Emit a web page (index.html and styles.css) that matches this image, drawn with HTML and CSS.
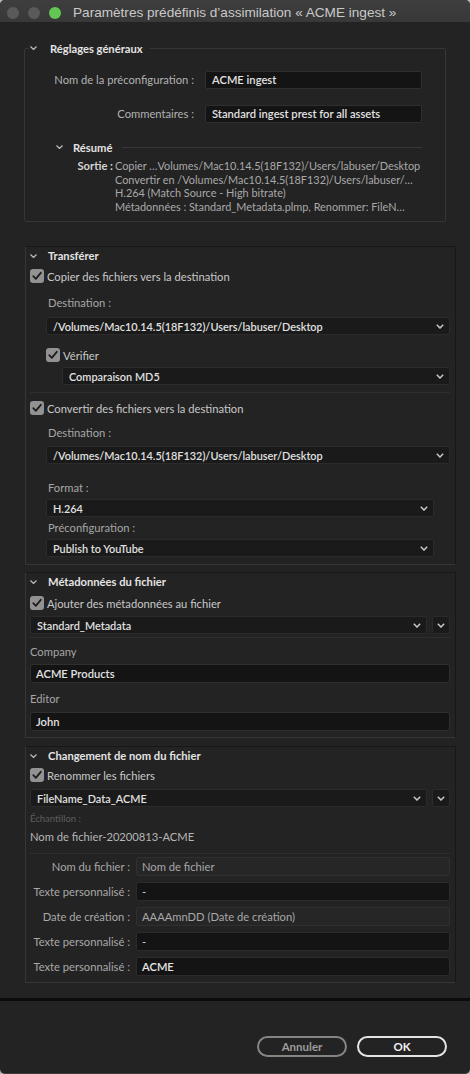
FILE: index.html
```html
<!DOCTYPE html>
<html lang="fr">
<head>
<meta charset="utf-8">
<title>Paramètres prédéfinis d’assimilation</title>
<link rel="stylesheet" href="styles.css">
</head>
<body>
<div class="window">
  <header class="titlebar">
    <div class="lights">
      <span class="light gray"></span>
      <span class="light gray"></span>
      <span class="light green"></span>
    </div>
    <div class="title">Paramètres prédéfinis d’assimilation « ACME ingest »</div>
  </header>

  <main class="content">
    <fieldset class="general">
      <legend><svg class="chev" width="7" height="4" viewBox="0 0 7 4"><polyline points="0.5,0.5 3.5,3.5 6.5,0.5"/></svg><span class="legend-text">Réglages généraux</span></legend>
      <div class="form-grid">
        <div class="form-label">Nom de la préconfiguration :</div>
        <div class="input strong">ACME ingest</div>
        <div class="form-label">Commentaires :</div>
        <div class="input strong">Standard ingest prest for all assets</div>
      </div>
      <div class="summary-head">
        <svg class="chev" width="7" height="4" viewBox="0 0 7 4"><polyline points="0.5,0.5 3.5,3.5 6.5,0.5"/></svg>
        <span class="summary-title">Résumé</span>
        <span class="rule"></span>
      </div>
      <div class="summary">
        <div class="summary-label">Sortie :</div>
        <div class="summary-lines">
          <div>Copier …Volumes/Mac10.14.5(18F132)/Users/labuser/Desktop</div>
          <div>Convertir en /Volumes/Mac10.14.5(18F132)/Users/labuser/…</div>
          <div>H.264 (Match Source - High bitrate)</div>
          <div>Métadonnées : Standard_Metadata.plmp, Renommer: FileN…</div>
        </div>
      </div>
    </fieldset>

    <div class="sections">
      <section class="box">
        <div class="sec-head"><svg class="chev" width="7" height="4" viewBox="0 0 7 4"><polyline points="0.5,0.5 3.5,3.5 6.5,0.5"/></svg><span>Transférer</span></div>
        <div class="check-row mt6"><span class="checkbox"><svg width="14" height="14" viewBox="0 0 14 14"><polyline points="3.3,7.2 5.8,9.8 10.8,3.8"/></svg></span><span>Copier des fichiers vers la destination</span></div>
        <div class="field-label indent mt13">Destination :</div>
        <div class="dropdown indent mt7"><span>/Volumes/Mac10.14.5(18F132)/Users/labuser/Desktop</span><svg class="dd-chev" width="8" height="5" viewBox="0 0 8 5"><polyline points="0.8,0.8 4,4 7.2,0.8"/></svg></div>
        <div class="check-row indent mt13"><span class="checkbox"><svg width="14" height="14" viewBox="0 0 14 14"><polyline points="3.3,7.2 5.8,9.8 10.8,3.8"/></svg></span><span>Vérifier</span></div>
        <div class="dropdown indent2 mt5"><span>Comparaison MD5</span><svg class="dd-chev" width="8" height="5" viewBox="0 0 8 5"><polyline points="0.8,0.8 4,4 7.2,0.8"/></svg></div>
        <div class="separator mt7"></div>
        <div class="check-row mt8"><span class="checkbox"><svg width="14" height="14" viewBox="0 0 14 14"><polyline points="3.3,7.2 5.8,9.8 10.8,3.8"/></svg></span><span>Convertir des fichiers vers la destination</span></div>
        <div class="field-label indent mt11">Destination :</div>
        <div class="dropdown indent mt6"><span>/Volumes/Mac10.14.5(18F132)/Users/labuser/Desktop</span><svg class="dd-chev" width="8" height="5" viewBox="0 0 8 5"><polyline points="0.8,0.8 4,4 7.2,0.8"/></svg></div>
        <div class="field-label indent mt17">Format :</div>
        <div class="dropdown indent short mt4"><span>H.264</span><svg class="dd-chev" width="8" height="5" viewBox="0 0 8 5"><polyline points="0.8,0.8 4,4 7.2,0.8"/></svg></div>
        <div class="field-label indent mt4">Préconfiguration :</div>
        <div class="dropdown indent short mt4"><span>Publish to YouTube</span><svg class="dd-chev" width="8" height="5" viewBox="0 0 8 5"><polyline points="0.8,0.8 4,4 7.2,0.8"/></svg></div>
      </section>

      <section class="box box-meta">
        <div class="sec-head"><svg class="chev" width="7" height="4" viewBox="0 0 7 4"><polyline points="0.5,0.5 3.5,3.5 6.5,0.5"/></svg><span>Métadonnées du fichier</span></div>
        <div class="check-row mt7"><span class="checkbox"><svg width="14" height="14" viewBox="0 0 14 14"><polyline points="3.3,7.2 5.8,9.8 10.8,3.8"/></svg></span><span>Ajouter des métadonnées au fichier</span></div>
        <div class="dd-row mt6">
          <div class="dropdown grow"><span>Standard_Metadata</span><svg class="dd-chev" width="8" height="5" viewBox="0 0 8 5"><polyline points="0.8,0.8 4,4 7.2,0.8"/></svg></div>
          <div class="dd-button"><svg class="dd-chev" width="8" height="5" viewBox="0 0 8 5"><polyline points="0.8,0.8 4,4 7.2,0.8"/></svg></div>
        </div>
        <div class="separator mt3"></div>
        <div class="field-label mt7">Company</div>
        <div class="input wide strong mt5">ACME Products</div>
        <div class="field-label mt9">Editor</div>
        <div class="input wide strong mt6">John</div>
      </section>

      <section class="box box-rename">
        <div class="sec-head"><svg class="chev" width="7" height="4" viewBox="0 0 7 4"><polyline points="0.5,0.5 3.5,3.5 6.5,0.5"/></svg><span>Changement de nom du fichier</span></div>
        <div class="check-row mt5"><span class="checkbox"><svg width="14" height="14" viewBox="0 0 14 14"><polyline points="3.3,7.2 5.8,9.8 10.8,3.8"/></svg></span><span>Renommer les fichiers</span></div>
        <div class="dd-row mt7">
          <div class="dropdown grow"><span>FileName_Data_ACME</span><svg class="dd-chev" width="8" height="5" viewBox="0 0 8 5"><polyline points="0.8,0.8 4,4 7.2,0.8"/></svg></div>
          <div class="dd-button"><svg class="dd-chev" width="8" height="5" viewBox="0 0 8 5"><polyline points="0.8,0.8 4,4 7.2,0.8"/></svg></div>
        </div>
        <div class="sample-label mt6">Échantillon :</div>
        <div class="sample-value mt5">Nom de fichier-20200813-ACME</div>
        <div class="separator mt9"></div>
        <div class="rename-grid mt3">
          <div class="row-label">Nom du fichier :</div>
          <div class="row-input disabled">Nom de fichier</div>
          <div class="row-label">Texte personnalisé :</div>
          <div class="row-input">-</div>
          <div class="row-label">Date de création :</div>
          <div class="row-input disabled">AAAAmnDD (Date de création)</div>
          <div class="row-label">Texte personnalisé :</div>
          <div class="row-input">-</div>
          <div class="row-label">Texte personnalisé :</div>
          <div class="row-input strong">ACME</div>
        </div>
      </section>
    </div>

    <div class="divider"></div>

    <footer class="footer">
      <button class="btn btn-cancel">Annuler</button>
      <button class="btn btn-ok">OK</button>
    </footer>
  </main>
</div>
</body>
</html>
```

FILE: styles.css
```css
* { box-sizing: border-box; }

html, body {
  margin: 0;
  padding: 0;
}

body {
  width: 470px;
  height: 1074px;
  background: #b9b9b9;
  font-family: Lato, "Liberation Sans", sans-serif;
  font-size: 11.2px;
  color: #c4c4c4;
  overflow: hidden;
}

.window {
  width: 470px;
  height: 1074px;
  background: #232323;
  border-radius: 5px 5px 5px 5px;
  border-bottom: 1px solid #3c3c3c;
  overflow: hidden;
  display: flex;
  flex-direction: column;
}

/* title bar */
.titlebar {
  height: 22px;
  flex: none;
  background: linear-gradient(#3e3e3e, #383838);
  display: flex;
  align-items: center;
  padding: 3px 0 0 7px;
}

.lights {
  display: flex;
  gap: 9px;
}

.light {
  width: 12px;
  height: 12px;
  border-radius: 50%;
}

.light.gray { background: #5a5a5a; }
.light.green { background: #62c554; }

.title {
  margin-left: 12px;
  font-family: "Liberation Sans", Arial, sans-serif;
  font-size: 13.6px;
  color: #c9c9c9;
  white-space: nowrap;
}

.content {
  flex: 1;
  display: flex;
  flex-direction: column;
}

/* chevrons */
.chev {
  flex: none;
  fill: none;
  stroke: #bdbdbd;
  stroke-width: 1.2;
}

.dd-chev {
  flex: none;
  fill: none;
  stroke: #c8c8c8;
  stroke-width: 1.5;
}

/* general fieldset */
.general {
  margin: 19px 24px 0 24px;
  padding: 0 0 8px 4px;
  border: 1px solid #363636;
  border-radius: 2px;
  min-width: 0;
}

.general legend {
  padding: 0 7px 0 0;
  height: 14px;
  line-height: 14px;
  font-weight: 700;
  color: #e4e4e4;
  white-space: nowrap;
}

.general legend .chev {
  vertical-align: middle;
  margin: 0 13px 2px 1px;
}

.legend-text {
  vertical-align: middle;
}

.form-grid {
  margin-top: 16px;
  display: grid;
  grid-template-columns: 165px 217px;
  column-gap: 11px;
  row-gap: 16px;
}

.form-label {
  text-align: right;
  line-height: 18px;
  color: #b2b2b2;
  white-space: nowrap;
}

.input {
  height: 18px;
  line-height: 16px;
  padding: 0 6px;
  background: #141414;
  border: 1px solid #2f2f2f;
  border-radius: 2px;
  color: #e2e2e2;
  white-space: nowrap;
  overflow: hidden;
}

.strong { font-weight: 600; }

.input.wide {
  height: 19px;
  line-height: 17px;
  padding-left: 5px;
}

.summary-head {
  margin: 17px 23px 0 27px;
  height: 14px;
  display: flex;
  align-items: center;
}

.summary-title {
  margin-left: 10px;
  font-weight: 700;
  color: #e2e2e2;
}

.rule {
  flex: 1;
  height: 1px;
  margin-left: 10px;
  background: #363636;
}

.summary {
  margin: 5px 0 0 0;
  display: grid;
  grid-template-columns: 84px 1fr;
  column-gap: 2px;
  line-height: 13.5px;
}

.summary-label {
  text-align: right;
  font-weight: 700;
  color: #d4d4d4;
}

.summary-lines {
  color: #a9a9a9;
  white-space: nowrap;
  font-size: 10.9px;
}

/* sections */
.sections {
  margin: 24px 0 0 25px;
  width: 431px;
  display: flex;
  flex-direction: column;
}

.box {
  border: 1px solid;
  border-color: #171717 #171717 #363636 #363636;
  padding: 0 5px 7px 4px;
  display: flex;
  flex-direction: column;
}

.box-meta {
  margin-top: 7px;
  padding-bottom: 6px;
}

.box-rename {
  margin-top: 8px;
  padding-bottom: 6px;
}

.sec-head {
  height: 16px;
  display: flex;
  align-items: center;
  font-weight: 700;
  color: #e4e4e4;
  white-space: nowrap;
}

.sec-head .chev {
  margin: 1px 11px 0 0;
}

.check-row {
  height: 14px;
  display: flex;
  align-items: center;
  gap: 3px;
  color: #c8c8c8;
  white-space: nowrap;
}

.checkbox {
  flex: none;
  width: 14px;
  height: 14px;
  border-radius: 3px;
  background: #929292;
  display: flex;
}

.checkbox svg {
  fill: none;
  stroke: #1d1d1d;
  stroke-width: 1.8;
  stroke-linecap: round;
  stroke-linejoin: round;
}

.field-label {
  height: 14px;
  line-height: 14px;
  color: #a6a6a6;
  white-space: nowrap;
}

.field-label.indent { padding-left: 2px; }

.indent { margin-left: 16px; }
.indent2 { margin-left: 32px; }
.short { margin-right: 16px; }

.dropdown {
  height: 18px;
  display: flex;
  align-items: center;
  justify-content: space-between;
  padding: 0 5px 0 6px;
  background: #1a1a1a;
  border: 1px solid #2b2b2b;
  border-radius: 2px;
  font-weight: 600;
  font-size: 10.9px;
  color: #e0e0e0;
  white-space: nowrap;
}

.dd-row {
  display: flex;
  gap: 5px;
}

.dropdown.grow { flex: 1; }

.dd-button {
  flex: none;
  width: 18px;
  height: 18px;
  display: flex;
  align-items: center;
  justify-content: center;
  background: #1a1a1a;
  border: 1px solid #2b2b2b;
  border-radius: 2px;
}

.separator {
  height: 1px;
  background: #2e2e2e;
}

.sample-label {
  height: 12px;
  line-height: 12px;
  font-size: 9.5px;
  color: #5e5e5e;
}

.sample-value {
  height: 14px;
  line-height: 14px;
  color: #b6b6b6;
  white-space: nowrap;
}

.rename-grid {
  display: grid;
  grid-template-columns: 100px 1fr;
  column-gap: 6px;
  row-gap: 6px;
  grid-auto-rows: 19px;
}

.row-label {
  text-align: right;
  line-height: 19px;
  color: #a8a8a8;
  white-space: nowrap;
}

.row-input {
  line-height: 17px;
  padding: 0 5px;
  background: #141414;
  border: 1px solid #2b2b2b;
  border-radius: 2px;
  color: #d4d4d4;
  white-space: nowrap;
}

.row-input.disabled {
  background: #262626;
  border-color: #303030;
  color: #a8a8a8;
}

.row-input.strong { color: #e6e6e6; }

/* spacing helpers */
.mt3 { margin-top: 3px; }
.mt4 { margin-top: 4px; }
.mt5 { margin-top: 5px; }
.mt6 { margin-top: 6px; }
.mt7 { margin-top: 7px; }
.mt8 { margin-top: 8px; }
.mt9 { margin-top: 9px; }
.mt11 { margin-top: 11px; }
.mt13 { margin-top: 13px; }
.mt17 { margin-top: 17px; }

/* footer */
.divider {
  margin-top: 15px;
  height: 3px;
  background: #0b0b0b;
  flex: none;
}

.footer {
  display: flex;
  justify-content: flex-end;
  gap: 10px;
  padding: 35px 23px 0 0;
}

.btn {
  width: 90px;
  height: 21px;
  border-radius: 11px;
  background: transparent;
  font-family: Lato, "Liberation Sans", sans-serif;
  font-size: 11.5px;
  font-weight: 700;
  padding: 0;
  cursor: default;
}

.btn-cancel {
  border: 2px solid #858585;
  color: #9c9c9c;
}

.btn-ok {
  border: 2px solid #e4e4e4;
  color: #f2f2f2;
}
```
